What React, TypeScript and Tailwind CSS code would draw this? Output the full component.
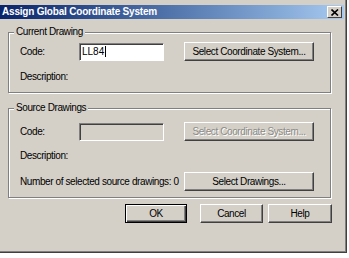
import type { ReactNode } from "react";

const font = "font-['Tahoma','Liberation_Sans',Arial,sans-serif]";

function Button({
  children,
  width,
  disabled,
  isDefault,
}: {
  children: ReactNode;
  width: string;
  disabled?: boolean;
  isDefault?: boolean;
}) {
  return (
    <div
      className={`${width} flex h-[19px] shrink-0 items-center justify-center whitespace-nowrap bg-[#d4d0c8] text-[10px] leading-none tracking-[-0.4px] ${
        isDefault
          ? "border border-black shadow-[inset_1px_1px_0_#fff,inset_-1px_-1px_0_#404040,inset_-2px_-2px_0_#808080]"
          : "border border-t-white border-l-white border-r-[#404040] border-b-[#404040] shadow-[inset_-1px_-1px_0_#808080]"
      } ${disabled ? "text-[#8c8a86] [text-shadow:1px_1px_0_#fff]" : "text-black"}`}
    >
      {children}
    </div>
  );
}

function Field({ value, disabled }: { value?: string; disabled?: boolean }) {
  return (
    <div
      className={`flex h-[18px] w-[85px] shrink-0 items-center border border-t-[#808080] border-l-[#808080] border-r-white border-b-white pl-[2px] text-[10px] text-black shadow-[inset_1px_1px_0_#404040] ${
        disabled ? "bg-[#d4d0c8]" : "bg-white"
      }`}
    >
      {value}
      {value && <span className="ml-px h-[11px] w-px bg-black" />}
    </div>
  );
}

function Group({ label, height, children }: { label: string; height: string; children: ReactNode }) {
  return (
    <div
      className={`relative ml-[8px] flex w-[323px] flex-col ${height} border border-[#808080] shadow-[inset_1px_1px_0_#fff,1px_1px_0_#fff]`}
    >
      <span className="absolute -top-[7px] left-[5px] whitespace-nowrap bg-[#d4d0c8] px-[2px] text-[10px] leading-[12px] tracking-[-0.4px] text-black">
        {label}
      </span>
      {children}
    </div>
  );
}

function Label({ children, width }: { children: ReactNode; width: string }) {
  return (
    <span className={`${width} shrink-0 whitespace-nowrap text-[10px] leading-[12px] tracking-[-0.4px] text-black`}>
      {children}
    </span>
  );
}

export default function App() {
  return (
    <div className={`h-[258px] w-[349px] bg-white ${font}`}>
      <div className="flex h-[253px] w-[347px] flex-col border-r border-b border-r-[#404040] border-b-[#404040] bg-[#d4d0c8] pt-[5px] shadow-[inset_-1px_-1px_0_#808080]">
        <div className="mr-[2px] flex h-[14px] shrink-0 items-center justify-between bg-gradient-to-r from-[#0a246a] to-[#a6caf0] pl-[2px]">
          <span className="whitespace-nowrap text-[10px] font-bold leading-none tracking-[-0.2px] text-white">
            Assign Global Coordinate System
          </span>
          <div className="mr-[2px] flex h-[12px] w-[15px] items-center justify-center border border-t-white border-l-white border-r-[#404040] border-b-[#404040] bg-[#d4d0c8]">
            <svg width="8" height="7" viewBox="0 0 8 7">
              <path d="M0.5 0.5 L7 6.5 M7 0.5 L0.5 6.5" stroke="#000" strokeWidth="1.6" />
            </svg>
          </div>
        </div>

        <div className="mt-[13px] flex">
          <Group label="Current Drawing" height="h-[61px]">
            <div className="flex items-center pt-[9px] pl-[11px]">
              <Label width="w-[59px]">Code:</Label>
              <Field value="LL84" />
              <div className="ml-[20px] flex">
                <Button width="w-[130px]">Select Coordinate System...</Button>
              </div>
            </div>
            <div className="mt-[10px] flex pl-[11px]">
              <Label width="w-auto">Description:</Label>
            </div>
          </Group>
        </div>

        <div className="mt-[15px] flex">
          <Group label="Source Drawings" height="h-[90px]">
            <div className="flex items-center pt-[13px] pl-[11px]">
              <Label width="w-[59px]">Code:</Label>
              <Field disabled />
              <div className="ml-[20px] flex">
                <Button width="w-[130px]" disabled>
                  Select Coordinate System...
                </Button>
              </div>
            </div>
            <div className="mt-[9px] flex pl-[11px]">
              <Label width="w-auto">Description:</Label>
            </div>
            <div className="mt-[10px] flex items-center pl-[11px]">
              <Label width="w-[164px]">Number of selected source drawings: 0</Label>
              <Button width="w-[130px]">Select Drawings...</Button>
            </div>
          </Group>
        </div>

        <div className="mt-[6px] flex pl-[125px]">
          <Button width="w-[62px]" isDefault>
            OK
          </Button>
          <div className="ml-[13px] flex">
            <Button width="w-[63px]">Cancel</Button>
          </div>
          <div className="ml-[5px] flex">
            <Button width="w-[64px]">Help</Button>
          </div>
        </div>
      </div>
    </div>
  );
}
